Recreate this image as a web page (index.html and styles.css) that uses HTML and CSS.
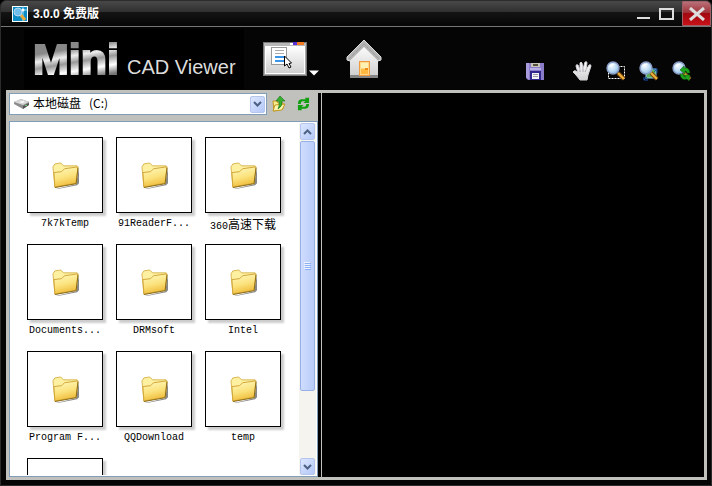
FILE: index.html
```html
<!DOCTYPE html>
<html lang="zh-CN">
<head>
    <meta charset="UTF-8">
    <meta name="viewport" content="width=device-width, initial-scale=1.0">
    <title>Mini CAD Viewer</title>
    <link rel="stylesheet" href="styles.css">
</head>
<body>

    <!-- shared icon shapes -->
    <svg class="defs" aria-hidden="true">
        <defs>
            <linearGradient id="folder-fill" x1="0" y1="0" x2="0.3" y2="1">
                <stop offset="0" stop-color="#fffbc4"/>
                <stop offset="0.6" stop-color="#fbe27c"/>
                <stop offset="1" stop-color="#f0bd3c"/>
            </linearGradient>
            <radialGradient id="lens-fill" cx="0.4" cy="0.35" r="0.7">
                <stop offset="0" stop-color="#f4fbff"/>
                <stop offset="0.6" stop-color="#b9d9f2"/>
                <stop offset="1" stop-color="#7fb0de"/>
            </radialGradient>
            <linearGradient id="silver" x1="0" y1="0" x2="0" y2="1">
                <stop offset="0" stop-color="#ffffff"/>
                <stop offset="1" stop-color="#cfcfcf"/>
            </linearGradient>
        </defs>
        <symbol id="folder" viewBox="0 0 28 28">
            <path d="M4 28 L25 23 L28 6 L28 22 L26 24 L6 28z" fill="#555" opacity="0.7"/>
            <path d="M1 5 L3 2 L9 1 L12 4 L26 4 L25 21 L3 26z" fill="#fdf0a0" stroke="#d8b450"/>
            <path d="M2 11 L10 10 L13 7 L27 5 L25 22 L3 26z" fill="url(#folder-fill)" stroke="#d0a436"/>
            <path d="M3 26.5 L25 22.5 L27 6" stroke="#8a6a14" fill="none"/>
        </symbol>
        <symbol id="lens" viewBox="0 0 20 20">
            <path d="M12 12 L18 18" stroke="#7c4a10" stroke-width="4"/>
            <path d="M12 12 L18 18" stroke="#f0b43c" stroke-width="2"/>
            <circle cx="7" cy="7" r="6" fill="url(#lens-fill)" stroke="#8a9cc4" stroke-width="1.4"/>
            <path d="M3 6 Q5 2 9 3 Q6 5 3 6z" fill="#fff"/>
        </symbol>
        <symbol id="refresh" viewBox="0 0 14 14">
            <path d="M1 7 Q1 2 5 2 L9 2 L9 0 L13 0 L13 6 L7 6 L9 4 L6 4 Q4 4 4 7z" fill="#12a012"/>
            <path d="M13 7 Q13 12 9 12 L5 12 L5 14 L1 14 L1 8 L7 8 L5 10 L8 10 Q10 10 10 7z" fill="#12a012"/>
        </symbol>
    </svg>

    <div class="window">
        <header class="titlebar">
            <svg class="app-icon" viewBox="0 0 16 16">
                <rect width="16" height="16" fill="#fff"/>
                <rect x="1" y="1" width="14" height="14" fill="#0d8cc6"/>
                <path d="M11 0 V15 M8 4 H15" stroke="#8fd8f5"/>
                <circle cx="11" cy="4" r="1.5" fill="#fff"/>
                <path d="M8 8 L13 14" stroke="#e9a93c" stroke-width="3"/>
                <circle cx="6" cy="6" r="4" fill="#6fbdea" stroke="#b9d7ee"/>
            </svg>
            <h1 class="title">3.0.0 免费版</h1>
            <button class="win-button" aria-label="Minimize">
                <svg width="14" height="14" viewBox="0 0 14 14"><path d="M0 11 H13" stroke="#ddd" stroke-width="2"/></svg>
            </button>
            <button class="win-button" aria-label="Maximize">
                <svg width="16" height="14" viewBox="0 0 16 14"><rect x="1" y="2" width="13" height="10" fill="none" stroke="#ddd" stroke-width="2"/></svg>
            </button>
            <button class="win-button close" aria-label="Close">
                <svg width="16" height="14" viewBox="0 0 16 14"><path d="M1 1 L15 13 M15 1 L1 13" stroke="#ddd" stroke-width="3"/></svg>
            </button>
        </header>

        <nav class="toolbar">
            <div class="brand">
                <span class="brand-mini">Mini</span>
                <span class="brand-name">CAD Viewer</span>
            </div>

            <button class="tool view-mode" aria-label="View mode">
                <svg width="44" height="34" viewBox="0 0 44 34">
                    <rect x="0.5" y="0.5" width="43" height="33" fill="#a8a8a8" stroke="#777"/>
                    <rect x="1" y="1" width="42" height="3" fill="#b8b8b8"/>
                    <rect x="27" y="1" width="3" height="2" fill="#fff"/>
                    <rect x="30" y="0" width="4" height="3" fill="#5a30d8"/>
                    <rect x="34" y="0" width="7" height="3" fill="#f47a20"/>
                    <rect x="2.5" y="4.5" width="39" height="27" fill="url(#silver)" stroke="#fff"/>
                    <rect x="8.5" y="5.5" width="15" height="17" fill="#fff" stroke="#999"/>
                    <path d="M12 8.5 H21 M12 11.5 H21" stroke="#aaa"/>
                    <path d="M12 15 H21 M12 19 H21" stroke="#3a94e8" stroke-width="2"/>
                    <path d="M21.5 14 V24 L24 22 L26 26 L28 25 L26 21.5 L28.5 21z" fill="#fff" stroke="#000"/>
                </svg>
                <svg width="10" height="6" viewBox="0 0 10 6"><path d="M0 0.5 H10 L5 5.5z" fill="#fff"/></svg>
            </button>

            <button class="tool home" aria-label="Home">
                <svg width="36" height="40" viewBox="0 0 36 40">
                    <path d="M4 18 L18 5 L32 18 V37 H4z" fill="url(#silver)"/>
                    <path d="M4 36 H32 V39 H4z" fill="#858585"/>
                    <path d="M18 1 L35 18 V21 L32 22 L18 8 L4 22 L1 21 V18z" fill="#b4b4b4" stroke="#dcdcdc"/>
                    <path d="M3 20 L18 5 L33 20" fill="none" stroke="#8f8f8f" stroke-dasharray="1 1"/>
                    <rect x="13.5" y="22.5" width="10" height="14" fill="#ffd98a" stroke="#ef9a3e"/>
                    <rect x="15" y="24" width="7" height="5" fill="#fff0b4"/>
                    <path d="M15 30 H22 V35 H15z" fill="#ffb940"/>
                    <rect x="19" y="29" width="3" height="2" fill="#f28a18"/>
                </svg>
            </button>

            <div class="tool-group">
                <button class="tool save" aria-label="Save">
                    <svg width="20" height="20" viewBox="0 0 20 20">
                        <path d="M1 2 H19 V19 H3 L1 17z" fill="#8a7cc8"/>
                        <path d="M1 2 H4 V18 H3 L1 16z" fill="#a89cdc"/>
                        <rect x="6" y="2" width="9" height="4" fill="#c9c5b8"/>
                        <rect x="8" y="3" width="5" height="2" fill="#55503c"/>
                        <path d="M5 7 H16 V9 H5z" fill="#b8b0e4"/>
                        <rect x="5" y="10" width="11" height="9" fill="#30288c"/>
                        <rect x="7" y="12" width="7" height="6" fill="#f4f4f8"/>
                        <path d="M8 13.5 H13 M8 15.5 H13" stroke="#9a9aa8"/>
                    </svg>
                </button>
                <button class="tool" aria-label="Pan">
                    <svg width="20" height="20" viewBox="0 0 20 20">
                        <path d="M7 19 L3 14 L0 11 Q1 9 3 10 L5 12 L3 5 Q3 3 5 4 L7 9 L7 2 Q8 0 9 2 L10 8 L12 1 Q14 0 14 2 L13 9 L16 4 Q18 3 18 5 L15 14 L14 19z" fill="url(#silver)" stroke="#d2d2d8"/>
                        <path d="M7 9 V11 M10 8 V11 M13 9 L12 11" stroke="#a5a5b0" fill="none"/>
                    </svg>
                </button>
                <button class="tool" aria-label="Zoom window">
                    <svg width="20" height="20" viewBox="0 0 20 20">
                        <rect x="2.5" y="5.5" width="16" height="12" fill="none" stroke="#fff" stroke-dasharray="2 1"/>
                        <use href="#lens"/>
                    </svg>
                </button>
                <button class="tool" aria-label="Zoom to fit">
                    <svg width="20" height="20" viewBox="0 0 20 20">
                        <rect x="7" y="8" width="10" height="9" fill="#5fae58" stroke="#8cc8f0"/>
                        <path d="M14 8 H18 V12 M18 8 L15 11 M5 16 V19 H9 M5 19 L8 16" fill="none" stroke="#1753a8"/>
                        <use href="#lens"/>
                    </svg>
                </button>
                <button class="tool" aria-label="Zoom previous">
                    <svg width="20" height="20" viewBox="0 0 20 20">
                        <use href="#lens"/>
                        <path d="M18 12 Q17 6 12 7 L12 5 L8 9 L13 13 L13 10 Q15 10 15 12z" fill="#1da51d" stroke="#0b5e0b" stroke-width="0.5"/>
                        <path d="M8 13 Q9 20 15 18 L17 20 L18 14 L12 14 L14 16 Q12 17 11 13z" fill="#1da51d" stroke="#0b5e0b" stroke-width="0.5"/>
                    </svg>
                </button>
            </div>
        </nav>

        <main class="workspace">
            <section class="browser">
                <div class="address">
                    <div class="combo">
                        <svg width="16" height="12" viewBox="0 0 16 12">
                            <path d="M0 4 L7 1 L15 4 L15 7 L9 11 L0 6z" fill="#8c8c8c"/>
                            <path d="M0 4 L7 1 L15 4 L9 7z" fill="#d6d6d6"/>
                            <path d="M9 8 L15 5 V7 L9 11z" fill="#555"/>
                            <path d="M5 4 L9 3 L11 4 L8 5z" fill="#fff"/>
                            <rect x="11" y="7" width="2" height="1" fill="#6fd06f"/>
                        </svg>
                        <select class="drive" aria-label="Drive">
                            <option>本地磁盘&nbsp;&nbsp;&nbsp;(C:)</option>
                        </select>
                        <span class="arrow-box">
                            <svg width="9" height="6" viewBox="0 0 9 6"><path d="M1 1 L4.5 4.5 L8 1" fill="none" stroke="#4d6185" stroke-width="2"/></svg>
                        </span>
                    </div>
                    <button class="small-button" aria-label="Up one level">
                        <svg width="14" height="16" viewBox="0 0 14 16">
                            <path d="M1 5 H5 L6 7 H11 V13 L2 15z" fill="#fbeb8c" stroke="#c09820"/>
                            <path d="M3 9 L13 8 L10 14 L1 15z" fill="#fdf4b0" stroke="#c09820"/>
                            <path d="M8 0 L13 5 H10 Q11 10 6 13 Q8 9 7 5 H4z" fill="#39b02c" stroke="#14701a" stroke-width="0.6"/>
                        </svg>
                    </button>
                    <button class="small-button" aria-label="Refresh">
                        <svg width="13" height="14" viewBox="0 0 14 14"><use href="#refresh"/></svg>
                    </button>
                </div>

                <div class="list">
                    <div class="items">
                        <figure class="item">
                            <div class="thumb"><svg class="folder"><use href="#folder"/></svg></div>
                            <figcaption>7k7kTemp</figcaption>
                        </figure>
                        <figure class="item">
                            <div class="thumb"><svg class="folder"><use href="#folder"/></svg></div>
                            <figcaption>91ReaderF...</figcaption>
                        </figure>
                        <figure class="item">
                            <div class="thumb"><svg class="folder"><use href="#folder"/></svg></div>
                            <figcaption>360<span class="han">高速下载</span></figcaption>
                        </figure>
                        <figure class="item">
                            <div class="thumb"><svg class="folder"><use href="#folder"/></svg></div>
                            <figcaption>Documents...</figcaption>
                        </figure>
                        <figure class="item">
                            <div class="thumb"><svg class="folder"><use href="#folder"/></svg></div>
                            <figcaption>DRMsoft</figcaption>
                        </figure>
                        <figure class="item">
                            <div class="thumb"><svg class="folder"><use href="#folder"/></svg></div>
                            <figcaption>Intel</figcaption>
                        </figure>
                        <figure class="item">
                            <div class="thumb"><svg class="folder"><use href="#folder"/></svg></div>
                            <figcaption>Program F...</figcaption>
                        </figure>
                        <figure class="item">
                            <div class="thumb"><svg class="folder"><use href="#folder"/></svg></div>
                            <figcaption>QQDownload</figcaption>
                        </figure>
                        <figure class="item">
                            <div class="thumb"><svg class="folder"><use href="#folder"/></svg></div>
                            <figcaption>temp</figcaption>
                        </figure>
                        <figure class="item">
                            <div class="thumb"></div>
                        </figure>
                    </div>
                    <div class="scrollbar">
                        <button class="arrow-box" aria-label="Scroll up">
                            <svg width="9" height="6" viewBox="0 0 9 6"><path d="M1 5 L4.5 1.5 L8 5" fill="none" stroke="#4d6185" stroke-width="2"/></svg>
                        </button>
                        <div class="track">
                            <div class="handle">
                                <svg width="7" height="8" viewBox="0 0 7 8"><path d="M0 0.5 H6 M0 2.5 H6 M0 4.5 H6 M0 6.5 H6" stroke="#eef4fe"/><path d="M1 1.5 H7 M1 3.5 H7 M1 5.5 H7 M1 7.5 H7" stroke="#8cb0f8"/></svg>
                            </div>
                        </div>
                        <button class="arrow-box" aria-label="Scroll down">
                            <svg width="9" height="6" viewBox="0 0 9 6"><path d="M1 1 L4.5 4.5 L8 1" fill="none" stroke="#4d6185" stroke-width="2"/></svg>
                        </button>
                    </div>
                </div>
            </section>
            <section class="canvas" aria-label="Drawing"></section>
        </main>
    </div>

</body>
</html>
```
FILE: styles.css
```css
* {
    box-sizing: border-box;
}

body {
    margin: 0;
    background-color: #000;
    font-family: "Liberation Sans", "Noto Sans CJK SC", sans-serif;
    font-size: 12px;
}

button {
    padding: 0;
    border: none;
    background: none;
    cursor: pointer;
}

svg {
    display: block;
    flex: none;
}

.defs {
    width: 0;
    height: 0;
}

.window {
    display: flex;
    flex-direction: column;
    height: 100vh;
    padding-bottom: 5px;
    background-color: #050505;
    border: 1px solid #2c2c2c;
    border-radius: 6px 6px 0 0;
}

/* title bar */
.titlebar {
    display: flex;
    align-items: center;
    height: 26px;
    padding-left: 11px;
    background: linear-gradient(#484848 0, #303030 11px, #141414 11px, #060606 100%);
    border-bottom: 1px solid #777;
    border-radius: 5px 5px 0 0;
}

.app-icon {
    width: 16px;
    height: 16px;
}

.title {
    flex: 1;
    margin: 0 0 0 5px;
    color: #fff;
    font-size: 12px;
    line-height: 16px;
}

.win-button {
    display: flex;
    align-items: center;
    justify-content: center;
    width: 23px;
    height: 25px;
}

.close {
    width: 29px;
    margin-left: 4px;
    background: linear-gradient(#b87078 0, #a03038 11px, #a00810 11px, #c81018 100%);
    border: 1px solid #a06068;
    border-radius: 0 5px 0 0;
}

/* toolbar */
.toolbar {
    display: flex;
    align-items: center;
    height: 63px;
    padding: 0 19px 0 23px;
}

.brand {
    display: flex;
    align-items: baseline;
    gap: 8px;
    width: 220px;
    height: 60px;
    padding-left: 9px;
    background-color: #000;
    line-height: 60px;
    white-space: nowrap;
}

.brand-mini {
    color: transparent;
    font-size: 43px;
    font-weight: bold;
    background: linear-gradient(170deg, #888 35%, #eee 45%, #999 54%, #fff 66%, #777 78%);
    background-clip: text;
    -webkit-background-clip: text;
    -webkit-text-stroke: 2px transparent;
}

.brand-name {
    color: #ddd;
    font-size: 20px;
}

.tool {
    display: flex;
    align-items: flex-end;
}

.view-mode {
    gap: 2px;
    margin-left: 19px;
}

.home {
    margin-left: 27px;
}

.tool-group {
    display: flex;
    gap: 13px;
    margin-left: auto;
    padding-top: 24px;
}

.save {
    margin-right: 15px;
}

/* main area */
.workspace {
    display: flex;
    flex: 1;
    min-height: 0;
    margin: 0 4px 0 5px;
    padding: 3px;
    background-color: #c0c0bc;
}

.browser {
    display: flex;
    flex-direction: column;
    gap: 6px;
    width: 309px;
    margin-right: 4px;
    box-shadow: 3px 0 0 #000;
}

.address {
    display: flex;
    align-items: center;
    height: 22px;
    padding-right: 3px;
}

.combo {
    display: flex;
    align-items: center;
    flex: 1;
    gap: 3px;
    height: 22px;
    padding: 1px 1px 1px 4px;
    background-color: #fff;
    border: 1px solid #7f9db9;
}

.drive {
    flex: 1;
    min-width: 0;
    height: 18px;
    padding: 0 0 2px;
    color: #000;
    background: none;
    border: none;
    font-family: "Noto Sans CJK SC", sans-serif;
    font-size: 12px;
    line-height: 16px;
    appearance: none;
}

.arrow-box {
    display: flex;
    align-items: center;
    justify-content: center;
    width: 15px;
    height: 17px;
    background: linear-gradient(135deg, #dce6fe, #b4c8f8);
    border: 1px solid #b4c6ee;
    border-radius: 2px;
}

.small-button {
    display: flex;
    align-items: center;
    justify-content: center;
    width: 24px;
}

.list {
    display: flex;
    flex: 1;
    min-height: 0;
    padding: 1px;
    background-color: #fff;
    border: 1px solid #7f9db9;
}

.items {
    display: grid;
    flex: 1;
    grid-template-columns: repeat(3, 76px);
    grid-auto-rows: 94px;
    align-content: start;
    gap: 13px;
    padding: 14px 0 0 16px;
    overflow: hidden;
}

.item {
    margin: 0;
}

.thumb {
    display: flex;
    align-items: center;
    justify-content: center;
    height: 76px;
    background-color: #fff;
    border: 1px solid #000;
    box-shadow: 3px 3px 2px #ccc;
}

.folder {
    width: 27px;
    height: 27px;
}

figcaption {
    margin-top: 3px;
    color: #000;
    font-family: "Liberation Mono", monospace;
    font-size: 10px;
    line-height: 15px;
    text-align: center;
    white-space: nowrap;
}

.han {
    font-family: "Noto Sans CJK SC", sans-serif;
    font-size: 12px;
}

.scrollbar {
    display: flex;
    flex-direction: column;
    align-items: center;
    width: 17px;
    background-color: #f6f4ee;
}

.track {
    flex: 1;
    padding: 1px 0;
}

.handle {
    display: flex;
    align-items: center;
    justify-content: center;
    width: 15px;
    height: 79%;
    background: linear-gradient(to right, #cfdcfe, #b8ccf8);
    border: 1px solid #98b0e8;
    border-radius: 2px;
}

.canvas {
    flex: 1;
    background-color: #000;
}
```
